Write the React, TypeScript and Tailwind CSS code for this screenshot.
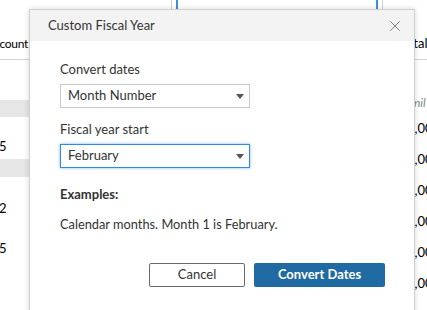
import React from 'react';
import { X } from 'lucide-react';

const rightValues = ['1,000', '1,000', '1,000', '1,000', '1,000', '1,000'];

const SelectBox = ({ value, focused }: { value: string; focused?: boolean }) => (
  <div
    className={`flex items-center justify-between w-[190px] h-[24px] pl-[7px] pr-[5px] bg-white border ${
      focused ? 'border-[#2f8ae0] shadow-[0_0_3px_rgba(47,138,224,0.6)]' : 'border-[#c8c8c8]'
    }`}
  >
    <span className="text-[13px] text-[#333]">{value}</span>
    <svg width="8" height="5" viewBox="0 0 8 5">
      <path d="M0 0 L8 0 L4 5 Z" fill="#555" />
    </svg>
  </div>
);

const App = () => {
  return (
    <div className="relative w-[427px] h-[310px] overflow-hidden bg-white font-['Lato',sans-serif] text-[#333]">
      {/* background sheet */}
      <div className="flex h-full">
        <div className="w-[29px] flex flex-col overflow-hidden">
          <div className="h-[60px] flex items-end justify-end pb-[6px] pr-[1px] border-b border-[#d4d4d4]">
            <span className="text-[12px] tracking-[-0.3px] text-black whitespace-nowrap">Account</span>
          </div>
          <div className="h-[40px]" />
          <div className="h-[17px] bg-[#e6e6e6]" />
          <div className="h-[42px] flex items-end pb-[3px] text-[13px] text-black -ml-[1px]">5</div>
          <div className="h-[18px] bg-[#e6e6e6]" />
          <div className="h-[22px]" />
          <div className="h-[20px] flex items-center text-[13px] text-black -ml-[1px]">2</div>
          <div className="h-[20px]" />
          <div className="h-[20px] flex items-center text-[13px] text-black -ml-[1px]">5</div>
        </div>
        <div className="flex-1">
          <div className="ml-[142px] w-[212px] h-[30px] border-x border-[#d0d0d0] px-[4px]">
            <div className="h-full border-x-2 border-[#3d8fdc]" />
          </div>
        </div>
        <div className="w-[32px] flex flex-col overflow-hidden">
          <div className="h-[60px] flex items-end pb-[6px] pl-[5px] border-b border-[#d4d4d4]">
            <span className="text-[13px] text-black whitespace-nowrap">Total</span>
          </div>
          <div className="h-[52px] flex items-end pl-[19px]">
            <span className="text-[12px] italic text-[#888] whitespace-nowrap">nil</span>
          </div>
          <div className="flex flex-col pt-[7px] gap-[13px]">
            {rightValues.map((v, i) => (
              <span key={i} className="h-[18px] text-[13px] text-black whitespace-nowrap pl-[12px]">
                {v}
              </span>
            ))}
          </div>
        </div>
      </div>

      {/* dialog */}
      <div className="absolute left-[29px] top-[9px] w-[386px] h-[320px] bg-white border border-[#cfcfcf] shadow-[0_0_6px_rgba(0,0,0,0.15)]">
        <div className="h-[31px] bg-[#f3f3f3] flex items-center justify-between pl-[18px] pr-[10px]">
          <span className="text-[13px] text-[#333]">Custom Fiscal Year</span>
          <X size={18} strokeWidth={1.1} className="text-[#666]" />
        </div>
        <div className="pl-[30px] pr-[29px] pt-[19px]">
          <div className="text-[13px] leading-[18px] mb-[6px]">Convert dates</div>
          <SelectBox value="Month Number" />
          <div className="text-[13px] leading-[18px] mt-[12px] mb-[6px]">Fiscal year start</div>
          <SelectBox value="February" focused />
          <div className="text-[13px] leading-[18px] font-bold mt-[17px]">Examples:</div>
          <div className="text-[12.8px] leading-[18px] mt-[12px]">Calendar months. Month 1 is February.</div>
          <div className="flex justify-end gap-[9px] mt-[30px]">
            <button className="w-[96px] h-[24px] border border-[#6b6b6b] rounded-[2px] bg-white text-[13px] text-[#333]">
              Cancel
            </button>
            <button className="w-[131px] h-[24px] rounded-[2px] bg-[#1f6aa2] text-[13px] font-bold text-white">
              Convert Dates
            </button>
          </div>
        </div>
      </div>
    </div>
  );
};

export default App;
